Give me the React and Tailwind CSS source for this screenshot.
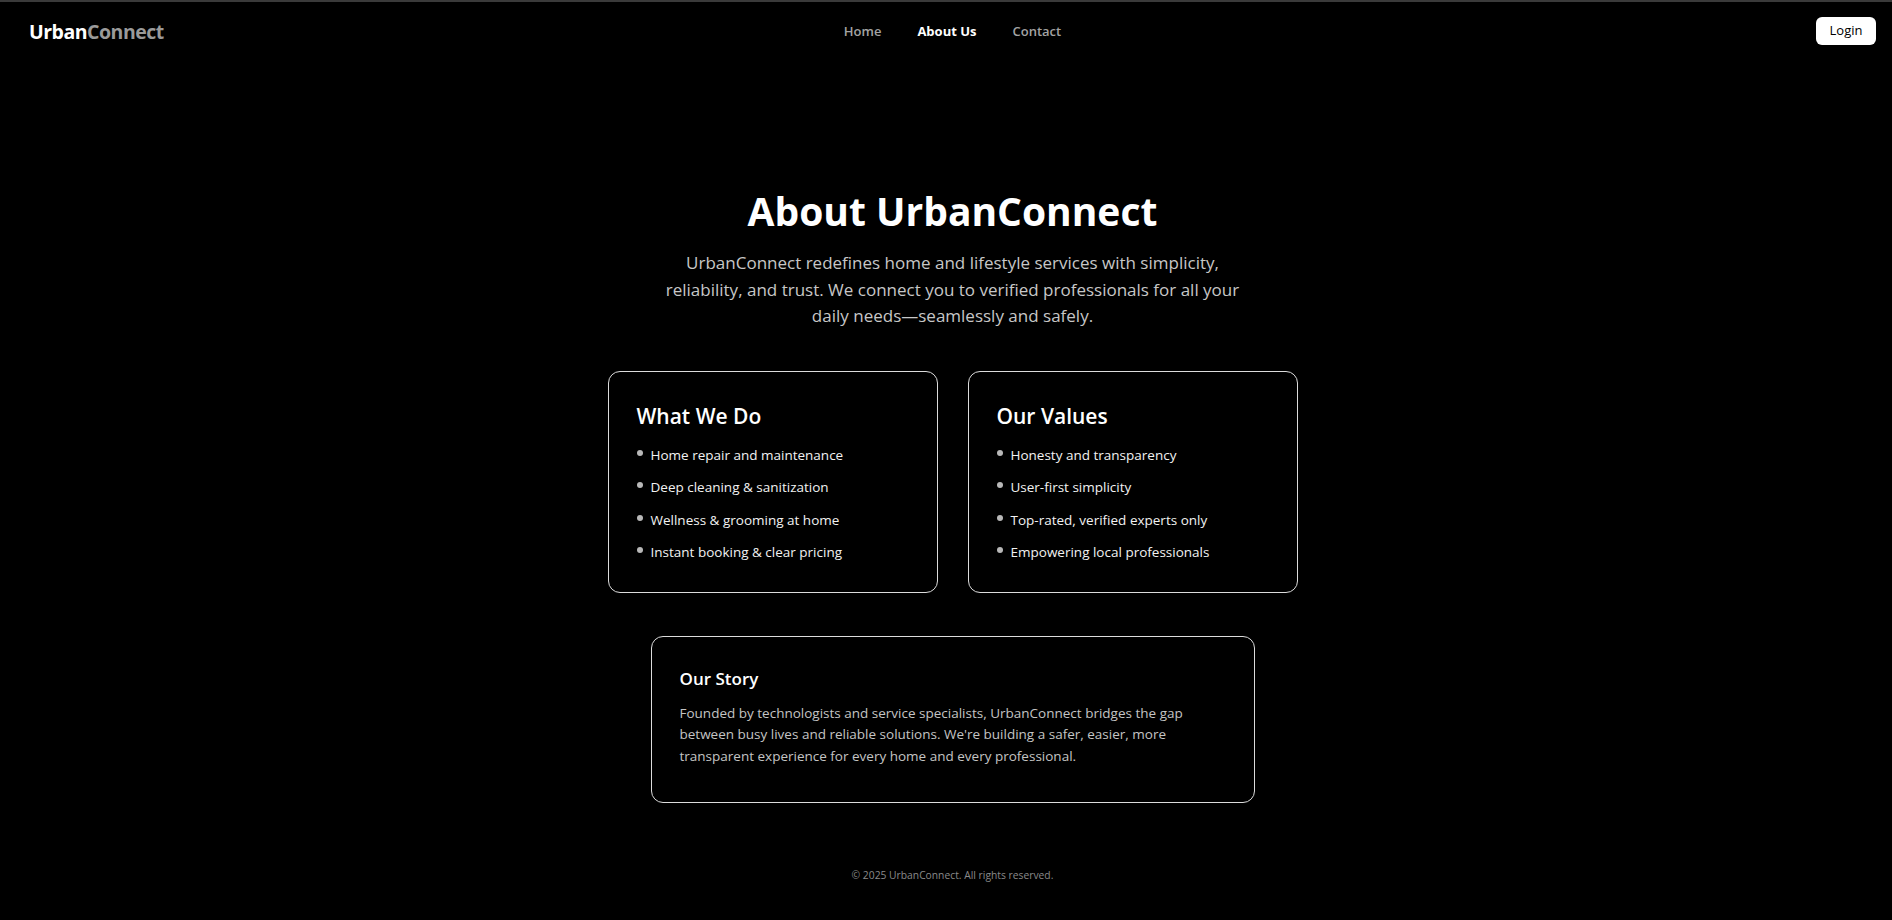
import React from 'react';

const whatWeDo = [
  'Home repair and maintenance',
  'Deep cleaning & sanitization',
  'Wellness & grooming at home',
  'Instant booking & clear pricing',
];

const ourValues = [
  'Honesty and transparency',
  'User-first simplicity',
  'Top-rated, verified experts only',
  'Empowering local professionals',
];

function InfoCard({ title, items }) {
  return (
    <div className="w-[330px] rounded-xl border border-[#dcdcdc] px-7 pt-[30px] pb-[29.5px]">
      <h3 className="text-[21px] leading-[28px] font-semibold text-white mb-[15px]">{title}</h3>
      <ul className="space-y-[12.5px]">
        {items.map((item) => (
          <li key={item} className="flex items-start gap-2 text-[13.5px] leading-5 text-[#f2f2f2]">
            <span className="mt-[5px] w-1.5 h-1.5 shrink-0 rounded-full bg-[#b8b8b8]"></span>
            <span>{item}</span>
          </li>
        ))}
      </ul>
    </div>
  );
}

export default function App() {
  return (
    <div className="min-h-screen bg-black overflow-hidden font-['Open_Sans',sans-serif]">
      <div className="w-[1905px] border-t-2 border-[#3a3a3a]">
        {/* Header */}
        <header className="h-[58px] grid grid-cols-[1fr_auto_1fr] items-center pl-[29px] pr-[29px]">
          <div className="mt-[2px] text-[19.5px] font-bold tracking-tight">
            <span className="text-white">Urban</span>
            <span className="text-[#9a9a9a]">Connect</span>
          </div>
          <nav className="mt-[2px] flex items-center gap-9 text-[13px] font-semibold">
            <a className="text-[#a3a3a3]">Home</a>
            <a className="text-white font-bold">About Us</a>
            <a className="text-[#a3a3a3]">Contact</a>
          </nav>
          <div className="flex justify-end">
            <button className="h-7 w-[60px] rounded-md bg-white text-[13px] text-black">Login</button>
          </div>
        </header>

        {/* Hero */}
        <main className="pt-[131px] pb-10 flex flex-col items-center">
          <h1 className="text-[39px] leading-none font-bold text-white">About UrbanConnect</h1>
          <p className="mt-[20px] max-w-[576px] text-center text-[17px] leading-[26.5px] text-[#c7c7c7]">
            UrbanConnect redefines home and lifestyle services with simplicity, reliability, and trust. We
            connect you to verified professionals for all your daily needs—seamlessly and safely.
          </p>

          <div className="mt-[41px] flex gap-[30px]">
            <InfoCard title="What We Do" items={whatWeDo} />
            <InfoCard title="Our Values" items={ourValues} />
          </div>

          <div className="mt-[43px] w-[604px] rounded-xl border border-[#dcdcdc] px-7 pt-[30px] pb-[35px]">
            <h3 className="text-[17px] leading-6 font-semibold text-white">Our Story</h3>
            <p className="mt-3 text-[13.5px] leading-[21.5px] text-[#c4c4c4]">
              Founded by technologists and service specialists, UrbanConnect bridges the gap between busy lives
              and reliable solutions. We're building a safer, easier, more transparent experience for every home
              and every professional.
            </p>
          </div>

          <footer className="mt-[64px] text-[10.3px] leading-4 text-[#8a8a8a]">© 2025 UrbanConnect. All rights reserved.</footer>
        </main>
      </div>
    </div>
  );
}
